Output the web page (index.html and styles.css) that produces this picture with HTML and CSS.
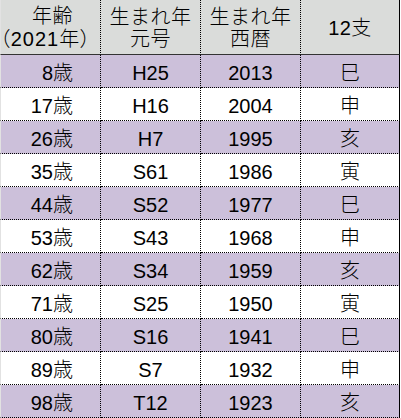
FILE: index.html
```html
<!DOCTYPE html>
<html lang="ja">
<head>
<meta charset="utf-8">
<link rel="stylesheet" href="styles.css">
</head>
<body>
<div class="sheet">
  <div class="row hdr">
    <div class="cell c1"><span class="l1">年齢</span><span class="l2"><span class="pa">（</span>2021年<span class="pa">）</span></span></div>
    <div class="cell c2"><span>生まれ年</span><span>元号</span></div>
    <div class="cell c3"><span>生まれ年</span><span>西暦</span></div>
    <div class="cell c4"><span>12支</span></div>
  </div>
  <div class="row odd"><div class="cell c1">8歳</div><div class="cell c2">H25</div><div class="cell c3">2013</div><div class="cell c4">巳</div></div>
  <div class="row even"><div class="cell c1">17歳</div><div class="cell c2">H16</div><div class="cell c3">2004</div><div class="cell c4">申</div></div>
  <div class="row odd"><div class="cell c1">26歳</div><div class="cell c2">H7</div><div class="cell c3">1995</div><div class="cell c4">亥</div></div>
  <div class="row even"><div class="cell c1">35歳</div><div class="cell c2">S61</div><div class="cell c3">1986</div><div class="cell c4">寅</div></div>
  <div class="row odd"><div class="cell c1">44歳</div><div class="cell c2">S52</div><div class="cell c3">1977</div><div class="cell c4">巳</div></div>
  <div class="row even"><div class="cell c1">53歳</div><div class="cell c2">S43</div><div class="cell c3">1968</div><div class="cell c4">申</div></div>
  <div class="row odd"><div class="cell c1">62歳</div><div class="cell c2">S34</div><div class="cell c3">1959</div><div class="cell c4">亥</div></div>
  <div class="row even"><div class="cell c1">71歳</div><div class="cell c2">S25</div><div class="cell c3">1950</div><div class="cell c4">寅</div></div>
  <div class="row odd"><div class="cell c1">80歳</div><div class="cell c2">S16</div><div class="cell c3">1941</div><div class="cell c4">巳</div></div>
  <div class="row even"><div class="cell c1">89歳</div><div class="cell c2">S7</div><div class="cell c3">1932</div><div class="cell c4">申</div></div>
  <div class="row odd"><div class="cell c1">98歳</div><div class="cell c2">T12</div><div class="cell c3">1923</div><div class="cell c4">亥</div></div>
</div>
</body>
</html>
```
FILE: styles.css
```css
html, body {
  margin: 0;
  padding: 0;
  background: #ffffff;
}

.sheet {
  width: 400px;
  font-family: "Liberation Sans", "Noto Sans CJK JP", sans-serif;
  font-size: 20px;
  font-weight: 300;
  color: #000000;
}

.row {
  display: grid;
  grid-template-columns: 101px 100px 100px 99px;
}

.cell {
  box-sizing: border-box;
  display: flex;
  align-items: center;
  justify-content: center;
  border-right: 1px dotted #000000;
  line-height: 20px;
  white-space: nowrap;
}

.c1 {
  border-left: 1px solid #e2e2e2;
}

.c4 {
  border-right: 1px solid #000000;
}

.hdr .cell {
  height: 55px;
  background: #dadcda;
  border-bottom: 1px solid #333333;
  flex-direction: column;
  line-height: 22px;
  padding-top: 1px;
  letter-spacing: 0.5px;
}

.hdr .c1 .l1 {
  padding-left: 4px;
}

.hdr .c1 .l2 {
  margin-left: -10px;
  letter-spacing: 1px;
}

.pa {
  font-family: "Noto Sans CJK JP", sans-serif;
  font-feature-settings: "palt";
}

.odd .cell,
.even .cell {
  height: 33px;
  border-bottom: 1px dotted #000000;
  padding-top: 3px;
}

.odd .cell {
  background: #ccc0da;
}

.even .cell {
  background: #ffffff;
}

.odd .c1,
.even .c1 {
  justify-content: flex-end;
  padding-right: 27px;
}
```
